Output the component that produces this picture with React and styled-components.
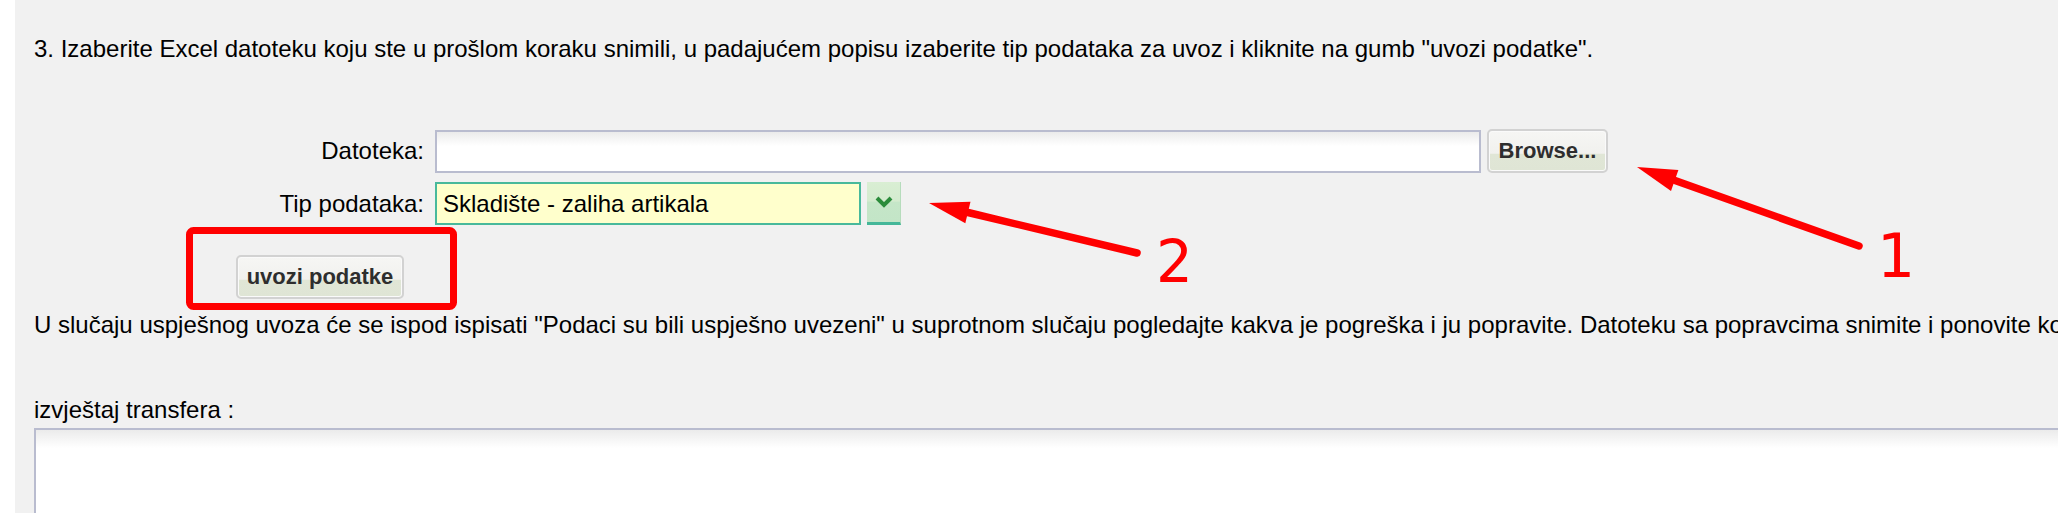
import React from 'react'
import styled, { createGlobalStyle } from 'styled-components'

const GlobalStyle = createGlobalStyle`
  html, body {
    margin: 0;
    padding: 0;
    background: #fff;
    overflow: hidden;
  }
  body {
    font-family: "Liberation Sans", Arial, sans-serif;
  }
`

const Page = styled.div`
  position: relative;
  width: 2058px;
  height: 513px;
  overflow: hidden;
  padding-left: 15px;
  box-sizing: border-box;
  background: #fff;
`

const Panel = styled.div`
  height: 100%;
  box-sizing: border-box;
  padding: 35px 0 0 19px;
  background: #f1f1f1;
  font-size: 24px;
  color: #000;
`

const Text = styled.p`
  margin: ${props => props.$top || 0}px 0 0;
  line-height: 28px;
  white-space: nowrap;
`

const Form = styled.div`
  display: flex;
  flex-direction: column;
  gap: 9px;
  margin-top: 66px;
`

const Row = styled.div`
  display: flex;
  align-items: center;
`

const Label = styled.label`
  width: 401px;
  padding-right: 11px;
  box-sizing: border-box;
  text-align: right;
  line-height: 28px;
  color: #000;
`

const FileInput = styled.div`
  width: 1046px;
  height: 43px;
  box-sizing: border-box;
  border: 2px solid #b9bccf;
  background: linear-gradient(to bottom, #ebebeb 0, #fff 14px);
`

const Button = styled.button`
  height: 44px;
  width: ${props => props.$width}px;
  margin-left: ${props => props.$offset || 0}px;
  box-sizing: border-box;
  padding: 0;
  border: 2px solid #d2d2d2;
  border-radius: 5px;
  box-shadow: inset 0 0 0 1px #fafafa;
  background: linear-gradient(to bottom, #f6f6f4 0%, #f1f1ee 56%, #e0e6d6 57%, #dfe5d5 100%);
  font-family: "Liberation Sans", Arial, sans-serif;
  font-weight: bold;
  font-size: 22px;
  color: #2e2e2e;
  cursor: pointer;
`

const Select = styled.div`
  width: 426px;
  height: 43px;
  box-sizing: border-box;
  border: 2px solid #48b99b;
  background: #ffffcc;
  padding-left: 6px;
  display: flex;
  align-items: center;
  color: #000;
`

const DropButton = styled.div`
  width: 34px;
  height: 43px;
  margin-left: 6px;
  box-sizing: border-box;
  border-bottom: 3px solid #45b799;
  border-right: 1px solid #b6dcbc;
  background: linear-gradient(to bottom, #d9eed3 0%, #d4ebcf 48%, #c5e6c8 50%, #c3e5c7 100%);
  display: flex;
  align-items: center;
  justify-content: center;
`

const ActionRow = styled.div`
  margin-top: 30px;
  padding-left: 202px;
`

const Report = styled.div`
  margin-top: 4px;
  width: 2100px;
  height: 200px;
  box-sizing: border-box;
  border: 2px solid #b9bccf;
  background: linear-gradient(to bottom, #ebebeb 0, #fff 18px);
`

const Overlay = styled.svg`
  position: absolute;
  top: 0;
  left: 0;
  pointer-events: none;
`

const Chevron = () => (
  <svg width="18" height="12" viewBox="0 0 18 12">
    <polyline points="2,2 9,9 16,2" fill="none" stroke="#2b8c3b" strokeWidth="4" strokeLinejoin="miter" />
  </svg>
)

const App = () => {
  return (
    <Page>
      <GlobalStyle />
      <Panel>
        <Text>
          3. Izaberite Excel datoteku koju ste u prošlom koraku snimili, u padajućem popisu izaberite tip podataka za uvoz i kliknite na gumb "uvozi podatke".
        </Text>
        <Form>
          <Row>
            <Label>Datoteka:</Label>
            <FileInput />
            <Button $width={121} $offset={6}>Browse...</Button>
          </Row>
          <Row>
            <Label>Tip podataka:</Label>
            <Select>Skladište - zaliha artikala</Select>
            <DropButton>
              <Chevron />
            </DropButton>
          </Row>
        </Form>
        <ActionRow>
          <Button $width={168}>uvozi podatke</Button>
        </ActionRow>
        <Text $top={12}>
          U slučaju uspješnog uvoza će se ispod ispisati "Podaci su bili uspješno uvezeni" u suprotnom slučaju pogledajte kakva je pogreška i ju popravite. Datoteku sa popravcima snimite i ponovite korake.
        </Text>
        <Text $top={57}>izvještaj transfera :</Text>
        <Report />
      </Panel>
      <Overlay width="2058" height="513" viewBox="0 0 2058 513">
        <rect x="189.5" y="230.5" width="264" height="76" rx="4" fill="none" stroke="#ff0000" strokeWidth="7" />
        <line x1="1137" y1="253" x2="968" y2="212.5" stroke="#ff0000" strokeWidth="7.5" strokeLinecap="round" />
        <polygon points="929,203 970.5,201.8 965.3,223.2" fill="#ff0000" />
        <line x1="1859" y1="246" x2="1675" y2="180.5" stroke="#ff0000" strokeWidth="7.5" strokeLinecap="round" />
        <polygon points="1637,167 1678.4,170.1 1671,190.9" fill="#ff0000" />
        <text x="1156" y="282" fontSize="58" fontFamily="DejaVu Sans, sans-serif" fill="#ff0000">2</text>
        <text x="1877" y="277" fontSize="60" fontFamily="DejaVu Sans, sans-serif" fill="#ff0000">1</text>
      </Overlay>
    </Page>
  )
}

export default App
